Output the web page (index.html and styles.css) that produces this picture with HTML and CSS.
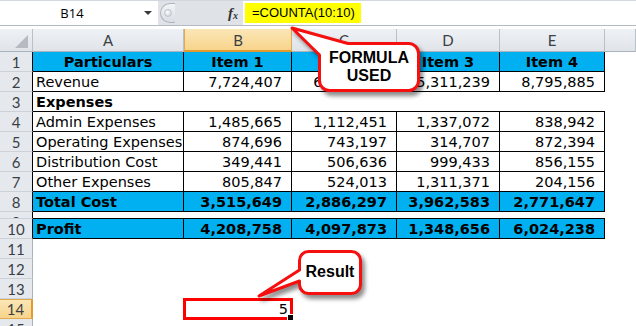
FILE: index.html
```html
<!DOCTYPE html>
<html lang="en">
<head>
    <meta charset="UTF-8">
    <meta name="viewport" content="width=device-width, initial-scale=1.0">
    <title>COUNTA example</title>
    <link rel="stylesheet" href="styles.css">
</head>
<body>
    <div class="window">
        <div class="formula-bar">
            <div class="name-box">
                <span class="cell-ref">B14</span>
                <span class="arrow"></span>
            </div>
            <div class="splitter">
                <span class="knob"><span class="dimple"></span></span>
                <span class="fx">f<sub>x</sub></span>
            </div>
            <div class="formula-input">
                <span class="formula">=COUNTA(10:10)</span>
            </div>
        </div>

        <div class="sheet">
            <div class="row heads">
                <div class="corner"><span class="corner-mark"></span></div>
                <div class="ch">A</div>
                <div class="ch active">B</div>
                <div class="ch">C</div>
                <div class="ch">D</div>
                <div class="ch">E</div>
                <div class="ch"></div>
            </div>

            <div class="row boxed">
                <div class="rh">1</div>
                <div class="c box blue center">Particulars</div>
                <div class="c box blue center">Item 1</div>
                <div class="c box blue center">Item 2</div>
                <div class="c box blue center">Item 3</div>
                <div class="c box blue center">Item 4</div>
                <div class="c"></div>
            </div>

            <div class="row boxed">
                <div class="rh">2</div>
                <div class="c box">Revenue</div>
                <div class="c box num">7,724,407</div>
                <div class="c box num">6,984,170</div>
                <div class="c box num">5,311,239</div>
                <div class="c box num">8,795,885</div>
                <div class="c"></div>
            </div>

            <div class="row boxed">
                <div class="rh">3</div>
                <div class="c open bold">Expenses</div>
                <div class="c open"></div>
                <div class="c open"></div>
                <div class="c open"></div>
                <div class="c open"></div>
                <div class="c"></div>
            </div>

            <div class="row boxed">
                <div class="rh">4</div>
                <div class="c box">Admin Expenses</div>
                <div class="c box num">1,485,665</div>
                <div class="c box num">1,112,451</div>
                <div class="c box num">1,337,072</div>
                <div class="c box num">838,942</div>
                <div class="c"></div>
            </div>

            <div class="row boxed">
                <div class="rh">5</div>
                <div class="c box">Operating Expenses</div>
                <div class="c box num">874,696</div>
                <div class="c box num">743,197</div>
                <div class="c box num">314,707</div>
                <div class="c box num">872,394</div>
                <div class="c"></div>
            </div>

            <div class="row boxed">
                <div class="rh">6</div>
                <div class="c box">Distribution Cost</div>
                <div class="c box num">349,441</div>
                <div class="c box num">506,636</div>
                <div class="c box num">999,433</div>
                <div class="c box num">856,155</div>
                <div class="c"></div>
            </div>

            <div class="row boxed">
                <div class="rh">7</div>
                <div class="c box">Other Expenses</div>
                <div class="c box num">805,847</div>
                <div class="c box num">524,013</div>
                <div class="c box num">1,311,371</div>
                <div class="c box num">204,156</div>
                <div class="c"></div>
            </div>

            <div class="row boxed">
                <div class="rh">8</div>
                <div class="c box blue bold">Total Cost</div>
                <div class="c box blue bold num">3,515,649</div>
                <div class="c box blue bold num">2,886,297</div>
                <div class="c box blue bold num">3,962,583</div>
                <div class="c box blue bold num">2,771,647</div>
                <div class="c"></div>
            </div>

            <div class="row boxed thin">
                <div class="rh">9</div>
                <div class="c open"></div>
                <div class="c open"></div>
                <div class="c open"></div>
                <div class="c open"></div>
                <div class="c open"></div>
                <div class="c"></div>
            </div>

            <div class="row boxed">
                <div class="rh">10</div>
                <div class="c box blue bold">Profit</div>
                <div class="c box blue bold num">4,208,758</div>
                <div class="c box blue bold num">4,097,873</div>
                <div class="c box blue bold num">1,348,656</div>
                <div class="c box blue bold num">6,024,238</div>
                <div class="c"></div>
            </div>

            <div class="row"><div class="rh">11</div></div>
            <div class="row"><div class="rh">12</div></div>
            <div class="row"><div class="rh">13</div></div>

            <div class="row">
                <div class="rh active">14</div>
                <div class="c"></div>
                <div class="c num selected">5</div>
            </div>

            <div class="row"><div class="rh">15</div></div>
        </div>

        <!-- callouts drawn over the sheet -->
        <div class="callout formula-callout">
            <svg class="bubble" width="140" height="80" viewBox="0 0 140 80">
                <path d="M 60 19.5 H 120.5 A 10 10 0 0 1 130.5 29.5 V 56.5 A 10 10 0 0 1 120.5 66.5 H 41.5 A 10 10 0 0 1 31.5 56.5 V 31 L 4 4 Z"/>
            </svg>
            <div class="callout-label">FORMULA<br>USED</div>
        </div>

        <div class="callout result-callout">
            <svg class="bubble" width="116" height="60" viewBox="0 0 116 60">
                <path d="M 45.5 24 V 14.5 A 9 9 0 0 1 54.5 5.5 H 97.5 A 9 9 0 0 1 106.5 14.5 V 38.5 A 9 9 0 0 1 97.5 47.5 H 54.5 A 9 9 0 0 1 45.5 38.5 V 35 L 5 50 Z"/>
            </svg>
            <div class="callout-label">Result</div>
        </div>
    </div>
</body>
</html>
```

FILE: styles.css
```css
* {
    margin: 0;
    padding: 0;
    box-sizing: border-box;
}

body {
    background: #fff;
    font-family: "DejaVu Sans", Verdana, sans-serif;
    color: #000;
}

.window {
    position: relative;
    width: 636px;
    height: 326px;
    overflow: hidden;
    background: #fff;
}

/* formula bar */

.formula-bar {
    display: flex;
    height: 26px;
    border-top: 1px solid #d3d8de;
    border-bottom: 1px solid #b4bac2;
    margin-bottom: 3px;
}

.name-box {
    width: 158px;
    display: flex;
    align-items: center;
    background: #fff;
}

.cell-ref {
    flex: 1;
    text-align: center;
    font-family: "Open Sans", sans-serif;
    font-size: 13px;
}

.arrow {
    width: 0;
    height: 0;
    border-left: 4px solid transparent;
    border-right: 4px solid transparent;
    border-top: 4px solid #3a3a3a;
    margin-right: 6px;
}

.splitter {
    width: 85px;
    display: flex;
    align-items: center;
    justify-content: space-between;
    background: #dfe3e8;
    padding: 0 5px 0 2px;
}

.knob {
    width: 15px;
    height: 20px;
    display: flex;
    align-items: center;
    justify-content: center;
    border: 1px solid #aeb5be;
    border-right: none;
    border-radius: 10px 0 0 10px;
    background: linear-gradient(#f3f5f7, #dadee3);
}

.dimple {
    width: 8px;
    height: 8px;
    border-radius: 50%;
    background: radial-gradient(circle at 40% 40%, #fff, #c3c9d0);
    border: 1px solid #c0c6cd;
}

.fx {
    font-family: "Liberation Serif", serif;
    font-style: italic;
    font-weight: bold;
    font-size: 15px;
    color: #333;
}

.fx sub {
    font-size: 10px;
    vertical-align: -1px;
}

.formula-input {
    flex: 1;
    display: flex;
    align-items: center;
    background: #fff;
    padding-left: 2px;
}

.formula {
    display: block;
    height: 20px;
    line-height: 20px;
    padding: 0 6px 0 7px;
    background: #ffff00;
    font-family: "Liberation Sans", Arial, sans-serif;
    font-size: 13px;
}

/* sheet */

.row {
    display: grid;
    grid-template-columns: 33px 151px 108px 105px 103px 105px 1fr;
    height: 20px;
    font-size: 14.5px;
}

.row.heads {
    height: 23px;
}

.row.thin {
    height: 7px;
}

.corner,
.ch {
    background: linear-gradient(#eef1f4, #e0e4e9);
    border-right: 1px solid #b9c0c8;
    border-bottom: 1px solid #a9b3be;
}

.corner {
    display: flex;
    align-items: flex-end;
    justify-content: flex-end;
    padding: 0 4px 3px 0;
}

.corner-mark {
    width: 0;
    height: 0;
    border-left: 13px solid transparent;
    border-bottom: 13px solid #b6bbc1;
}

.ch {
    display: flex;
    align-items: center;
    justify-content: center;
    font-family: "Lato", sans-serif;
    font-size: 15px;
    color: #3a3f46;
}

.ch.active {
    background: linear-gradient(#fbe6b6, #f8d48c);
    border-left: 1px solid #e2a94e;
    border-right: 1px solid #e2a94e;
    border-bottom: 2px solid #e29a2b;
}

.rh {
    display: flex;
    align-items: center;
    justify-content: center;
    overflow: hidden;
    background: #e5e8ed;
    border-right: 1px solid #a9b3be;
    border-bottom: 1px solid #cdd2d9;
    font-family: "Lato", sans-serif;
    font-size: 15px;
    color: #3a3f46;
}

.row.boxed .rh {
    border-right-color: #000;
}

.row.thin .rh {
    align-items: flex-start;
    line-height: 20px;
}

.rh.active {
    background: linear-gradient(#fbe6b6, #f8d48c);
    border-top: 1px solid #e2a94e;
    border-bottom: 1px solid #e2a94e;
    border-right: 2px solid #e29a2b;
}

.c {
    display: flex;
    align-items: center;
    padding: 0 3px;
    white-space: nowrap;
}

.box {
    border-right: 1px solid #000;
    border-bottom: 1px solid #000;
}

.open {
    border-bottom: 1px solid #000;
}

.num {
    justify-content: flex-end;
    padding-right: 9px;
}

.center {
    justify-content: center;
}

.blue {
    background: #00b0f0;
    font-weight: bold;
}

.bold {
    font-weight: bold;
}

.selected {
    position: relative;
    padding-right: 4px;
    outline: 3px solid #ff0000;
    outline-offset: -2px;
}

.selected::after {
    content: "";
    position: absolute;
    right: -2px;
    bottom: -2px;
    width: 5px;
    height: 5px;
    background: #000;
    border: 1px solid #fff;
}

/* callouts */

.callout {
    position: absolute;
    display: flex;
    align-items: center;
    justify-content: center;
    font-family: "Liberation Sans", Arial, sans-serif;
    font-weight: bold;
    font-size: 16px;
    line-height: 18px;
    text-align: center;
}

.bubble {
    position: absolute;
    left: 0;
    top: 0;
    filter: drop-shadow(3px 4px 2px rgba(0, 0, 0, 0.45));
}

.bubble path {
    fill: #fff;
    stroke: #f50f0f;
    stroke-width: 3;
    stroke-linejoin: round;
}

.callout-label {
    position: relative;
}

.formula-callout {
    left: 288px;
    top: 24px;
    width: 140px;
    height: 80px;
    padding: 18px 8px 12px 30px;
}

.result-callout {
    left: 254px;
    top: 246px;
    width: 116px;
    height: 60px;
    padding: 4px 8px 12px 44px;
}
```
